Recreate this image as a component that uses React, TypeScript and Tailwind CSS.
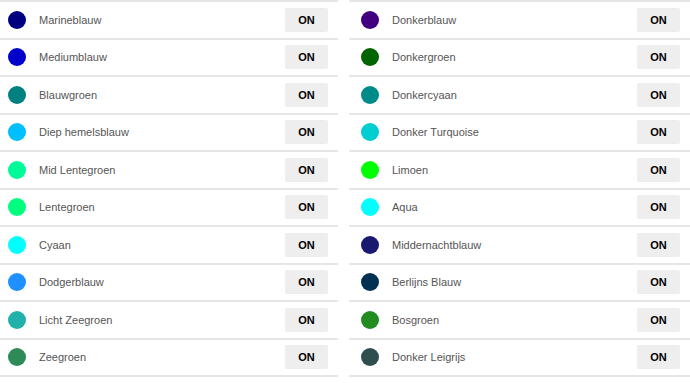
import React from "react";

type Item = { name: string; color: string };

const left: Item[] = [
  { name: "Marineblauw", color: "#000080" },
  { name: "Mediumblauw", color: "#0000cd" },
  { name: "Blauwgroen", color: "#008080" },
  { name: "Diep hemelsblauw", color: "#00bfff" },
  { name: "Mid Lentegroen", color: "#00fa9a" },
  { name: "Lentegroen", color: "#00ff7f" },
  { name: "Cyaan", color: "#00ffff" },
  { name: "Dodgerblauw", color: "#1e90ff" },
  { name: "Licht Zeegroen", color: "#20b2aa" },
  { name: "Zeegroen", color: "#2e8b57" },
];

const right: Item[] = [
  { name: "Donkerblauw", color: "#400080" },
  { name: "Donkergroen", color: "#006400" },
  { name: "Donkercyaan", color: "#008b8b" },
  { name: "Donker Turquoise", color: "#00ced1" },
  { name: "Limoen", color: "#00ff00" },
  { name: "Aqua", color: "#00ffff" },
  { name: "Middernachtblauw", color: "#191970" },
  { name: "Berlijns Blauw", color: "#003153" },
  { name: "Bosgroen", color: "#228b22" },
  { name: "Donker Leigrijs", color: "#2f4f4f" },
];

function Row({ item, pad }: { item: Item; pad: string }) {
  return (
    <div
      className={`flex h-[37.5px] items-center border-t-2 border-[#e6e6e6] pr-[10px] ${pad}`}
    >
      <span
        className="h-[18px] w-[18px] shrink-0 rounded-full"
        style={{ backgroundColor: item.color }}
      />
      <span className="ml-[13px] flex-1 text-[11px] text-[#555555]">
        {item.name}
      </span>
      <button className="h-6 w-[43px] rounded-[2px] bg-[#eeeeee] text-[11px] font-bold text-black">
        ON
      </button>
    </div>
  );
}

function Column({ items, pad, className }: { items: Item[]; pad: string; className: string }) {
  return (
    <div className={`self-start border-b-2 border-[#e6e6e6] ${className}`}>
      {items.map((it) => (
        <Row key={it.name} item={it} pad={pad} />
      ))}
    </div>
  );
}

export default function App() {
  return (
    <div className="flex h-[383px] w-[690px] gap-[11px] bg-white font-['Liberation_Sans',Arial,sans-serif]">
      <Column items={left} pad="pl-[8px]" className="w-[338px]" />
      <Column items={right} pad="pl-[12px]" className="flex-1" />
    </div>
  );
}
